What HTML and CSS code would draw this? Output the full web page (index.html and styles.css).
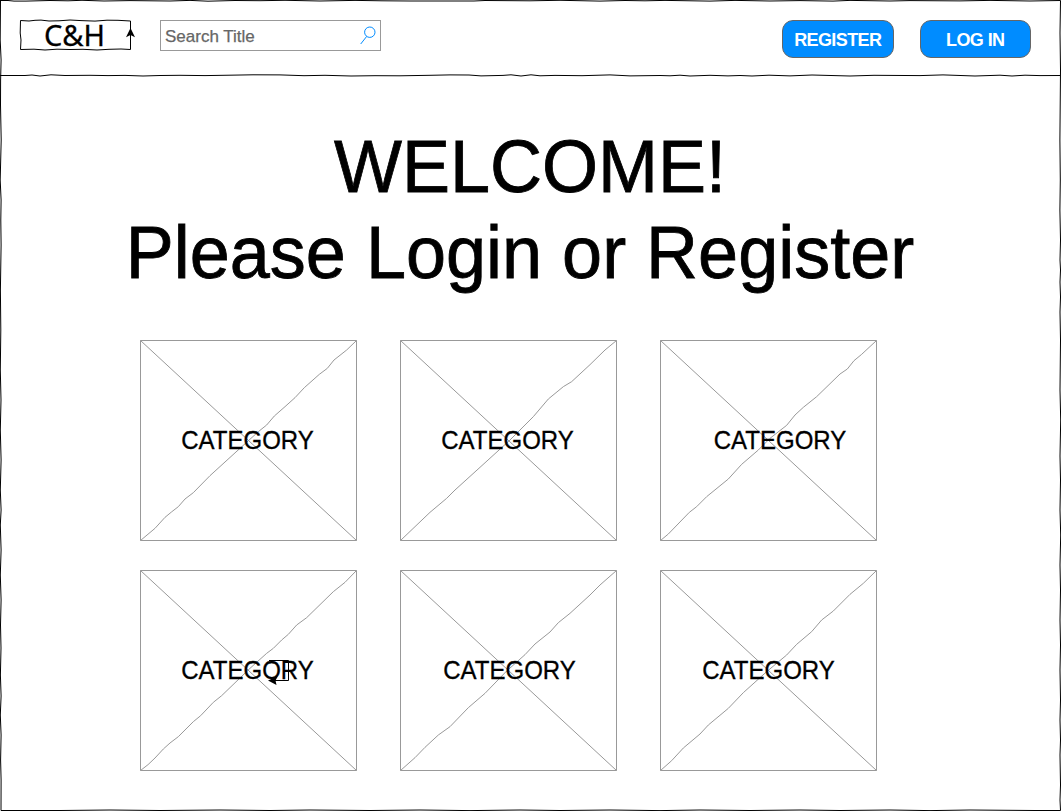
FILE: index.html
```html
<!DOCTYPE html>
<html lang="en">
<head>
<meta charset="utf-8">
<title>C&amp;H</title>
<link rel="stylesheet" href="styles.css">
</head>
<body>
<div class="page">
  <header class="header">
    <div class="logo">
      <svg class="logo-frame" viewBox="0 0 120 40" aria-hidden="true">
        <path class="ink" d="M5.500 5.500L14 6L20 5.300L26 5.100L34 6L44 5.800L55 5L66 5.600L80 6.100L92 5.200L103 5.300L115.500 6V34.500L106 34L94 34.300L82 35L68 34.300L55 34.500L42 34.200L30 35L19 34.200L5.500 34.500L6 25L5.200 18L5.500 5.500"/>
        <path d="M115.500 13 111 22.300 115.500 20 120 22.300Z"/>
      </svg>
      <span class="logo-text">C&amp;H</span>
    </div>
    <div class="search">
      <span>Search Title</span>
      <svg class="search-icon" viewBox="0 0 16 19" aria-hidden="true"><circle cx="9.800" cy="6.200" r="5.200"/><path d="M6.700 10.400.7 18"/></svg>
    </div>
    <nav class="actions">
      <button class="button">REGISTER</button>
      <button class="button">LOG IN</button>
    </nav>
  </header>
  <svg class="divider" viewBox="0 0 1061 4" aria-hidden="true"><path class="ink" d="M0 2.500H25L32 2L40 3L51 1.800L65 2.500L90 2.300L108 2.600L125 2.400L143 3L160 2.500L180 2.300L205 2.600L230 2.200L253 1.800L280 1.900L304 2.700L325 2.300L351 3L375 2.700L400 2.800L430 2.300L450 1.900L469 2L481 2.900L503 2.400L511 1.800L521 3L531 1.800L540 2.800L555 2.400L582 2.700L610 1.900L630 2.900L660 2.500L670 2.800L680 2.200L690 3L710 2.300L728 2.900L740 2.500L752 3L769 2.200L790 2.900L812 2L850 3L874 2.300L920 2.600L943 1.900L975 3L1000 2.200L1012 3L1025 2.200L1040 2.600L1060 2.500"/></svg>
  <main class="main">
    <h1 class="welcome"><span>WELCOME!</span><span>Please Login or Register</span></h1>
    <section class="cards">
      <div class="card">
        <svg class="cross" viewBox="30 30 651 603" aria-hidden="true"><path d="M31.500 31.500H679.500V631.500H31.500ZL679.500 631.500M31.500 631.500 75 595 105 562Q125 545 145 530L165 507 190 488 240 437 330 355 385 305 410 285 433 258 465 230 495 203 523 173 568 133 592 115 612 90 650 60 679.500 31.500"/></svg>
        <span class="label">CATEGORY</span>
      </div>
      <div class="card">
        <svg class="cross" viewBox="30 30 651 603" aria-hidden="true"><path d="M31.500 31.500H679.500V631.500H31.500ZL679.500 631.500M31.500 631.500 120 547 170 505 195 480 270 412 360 330 430 260 475 207 520 170 545 155 600 104 645 60 679.500 31.500"/></svg>
        <span class="label">CATEGORY</span>
      </div>
      <div class="card">
        <svg class="cross" viewBox="30 30 651 603" aria-hidden="true"><path d="M31.500 31.500H679.500V631.500H31.500ZL679.500 631.500M31.500 631.500 55 612 118 547 140 530 170 500 235 447 275 403 325 360 360 325 410 286 435 255 460 232 500 200 570 132 592 117 612 92 635 73 679.500 31.500"/></svg>
        <span class="label label-far">CATEGORY</span>
      </div>
      <div class="card">
        <svg class="cross" viewBox="30 30 651 603" aria-hidden="true"><path d="M31.500 31.500H679.500V631.500H31.500ZL679.500 631.500M31.500 631.500Q55 615 75 594L100 567 120 549 145 530 190 485 212 467 250 427 275 407 360 325 410 280 430 265 455 240 475 223 500 195 530 173 610 95 645 67 679.500 31.500"/></svg>
        <span class="label">CATEGORY</span>
        <svg class="connector" viewBox="0 0 22 26" aria-hidden="true"><path class="ink" d="M1 1.500H20.500V21.500H7"/><path d="M0 21.500 10 17 7.500 21.500 8.500 26Z"/></svg>
      </div>
      <div class="card">
        <svg class="cross" viewBox="30 30 651 603" aria-hidden="true"><path d="M31.500 31.500H679.500V631.500H31.500ZL679.500 631.500M31.500 631.500 75 593 105 562 145 525 180 500 235 443 285 400 350 333 405 284 435 252 480 216 505 188 540 160 600 105 630 75 679.500 31.500"/></svg>
        <span class="label label-near">CATEGORY</span>
      </div>
      <div class="card">
        <svg class="cross" viewBox="30 30 651 603" aria-hidden="true"><path d="M31.500 31.500H679.500V631.500H31.500ZL679.500 631.500M31.500 631.500 65 602 100 564 150 522 175 495 235 445 280 398 350 335 410 285 440 253 485 215 515 180 550 153 600 103 640 70 679.500 31.500"/></svg>
        <span class="label label-mid">CATEGORY</span>
      </div>
    </section>
  </main>
  <svg class="frame" viewBox="0 0 1061 811" aria-hidden="true"><path class="ink" d="M.5.500H8L14 1.100L26 1.100L50 .5L68 .8L82 .3L104 1L130 .6L170 1L190 .4L208 1.200L235 .5L260 .7L285 .3L320 1L355 .4L382 .8L410 1L440 1L474 1L485 .5L530 .8L560 .3L600 1.100L625 .5L645 .8L665 .4L710 1.100L735 .4L770 1L800 .6L833 1.100L850 .4L890 1L910 .6L960 .9L990 .4L1030 1L1060.500.500L1060 33L1060.500 70L1059.900 140L1060.300 180L1059.900 210L1060.500 240L1060 260L1060.500 270L1060 282L1060.500 297L1060 312L1060.500 340L1060 390L1060.700 420L1060 456L1060.500 480L1060 510L1060.700 535L1060 565L1060.500 590L1060 620L1060.500 645L1060 670L1060.500 700L1060 720L1060.500 740L1060 755L1060.500 785L1060 800L1060.500 810.500H1035L1008 810.300L970 810L930 810.600L890 810L840 810.500L800 810L750 810.500L700 810L660 810.600L610 810L560 810.500L520 810L470 810.600L420 810L370 810.500L310 810L270 810.500L220 810L160 810.500L110 810L60 810.500L1 810.500L1.100 780L.6 760L1.100 735L.3 715L1.100 696L.4 675L1 648L.5 625L1.100 600L.3 575L1.100 550L.3 525L1.100 510L.3 490L1.100 460L.3 430L1 400L.3 370L.8 330L.4 290L1.100 245L.8 220L1.100 200L.2 180L1.200 140L.5 105L.6 80L1.100 60L.2 40L.5 0"/></svg>
</div>
</body>
</html>
```
FILE: styles.css
```css
* { box-sizing: border-box; }
body {
  margin: 0;
  background: #fff;
  color: #000;
  font-family: "Liberation Sans", Arial, sans-serif;
}
svg { display: block; fill: #000; }
.page { position: relative; width: 1061px; height: 811px; overflow: hidden; }
.ink { fill: none; stroke: #000; stroke-width: 1; }
.frame { position: absolute; inset: 0; width: 1061px; height: 811px; pointer-events: none; }
.header { display: flex; align-items: flex-start; height: 73px; padding: 20px 30px 0 20px; }
.divider { width: 1061px; height: 4px; }
.logo { display: grid; grid-template-columns: 111px; place-items: center; width: 111px; height: 30px; }
.logo-frame { grid-area: 1 / 1; width: 120px; height: 40px; margin: -5px; justify-self: start; }
.logo-text {
  grid-area: 1 / 1;
  padding-right: 2px;
  font-family: "Noto Sans", "Open Sans", sans-serif;
  font-size: 29px;
  line-height: 30px;
  -webkit-text-stroke: .3px #000;
}
.search {
  display: flex;
  align-items: center;
  justify-content: space-between;
  width: 221px;
  height: 31px;
  margin-left: 29px;
  padding: 0 4px;
  border: 1px solid #999;
  color: #666;
  font-size: 17px;
  -webkit-text-stroke: .25px #666;
}
.search span { padding-top: 2px; }
.search-icon { width: 16px; height: 19px; fill: none; stroke: #008cff; stroke-width: 1; }
.actions { display: flex; gap: 26px; margin-left: auto; }
.button {
  width: 111.500px;
  height: 38px;
  padding: 1px 0 0;
  border: 1px solid #666;
  border-radius: 11px;
  background: #008cff;
  color: #fff;
  font: bold 18px/36px "Liberation Sans", Arial, sans-serif;
  letter-spacing: -.6px;
}
.main { padding-top: 46px; }
.welcome {
  display: flex;
  flex-direction: column;
  align-items: center;
  width: 1040px;
  margin: 0;
  font-size: 72px;
  font-weight: normal;
  line-height: 86px;
  white-space: nowrap;
  -webkit-text-stroke: .8px #000;
}
.welcome span { transform: scaleY(1.040); }
.welcome span:first-child { padding-left: 20px; }
.cards {
  display: grid;
  grid-template-columns: repeat(3, 217px);
  grid-auto-rows: 201px;
  gap: 29px 43px;
  padding: 45px 0 0 140px;
}
.card { position: relative; display: grid; place-items: center; }
.cross { grid-area: 1 / 1; width: 217px; height: 201px; fill: none; stroke: #999; stroke-width: 3; }
.label {
  grid-area: 1 / 1;
  font-size: 24px;
  line-height: 28px;
  margin-right: 2px;
  -webkit-text-stroke: .3px #000;
  transform: scaleY(1.040);
}
.label-far { margin: 0 0 0 23px; }
.label-near { margin: 0 0 0 2px; }
.label-mid { margin: 0; }
.connector { position: absolute; left: 128px; top: 89px; width: 22px; height: 26px; }
```
